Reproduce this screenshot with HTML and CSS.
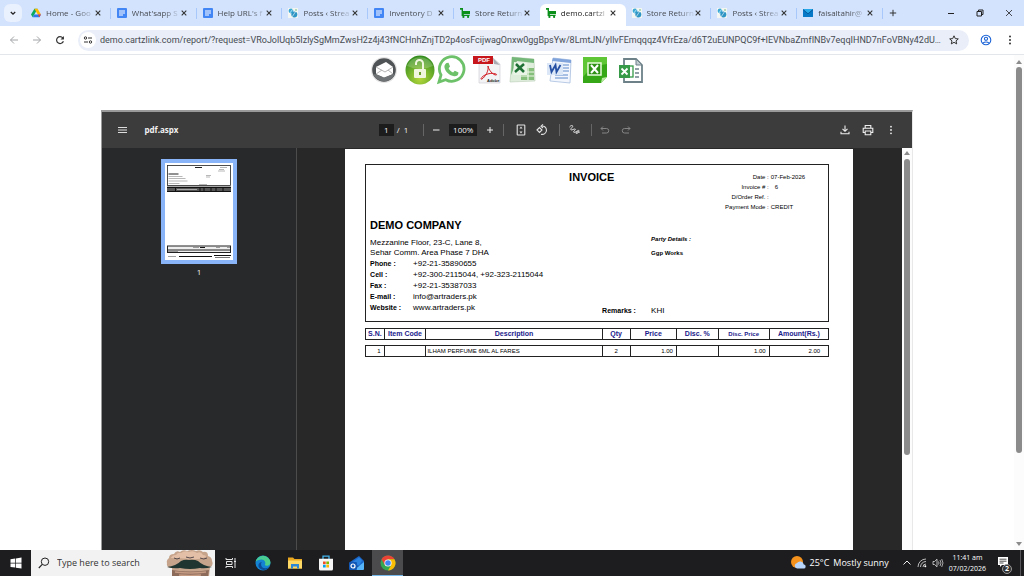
FILE: index.html
```html
<!DOCTYPE html>
<html lang="en">
<head>
<meta charset="utf-8">
<title>demo.cartzlink.com</title>
<link rel="stylesheet" href="styles.css">
</head>
<body>
<svg class="defs" aria-hidden="true">
  <symbol id="doc" viewBox="0 0 10 10"><rect width="10" height="10" rx="1" fill="#4285f4"/><path d="M2 3h6M2 5h6M2 7h4" stroke="#fff" stroke-width="1"/></symbol>
  <symbol id="drive" viewBox="0 0 10 10"><path d="M3.4.8h3.2L3.2 6.8 1.7 9.3 0 6.6z" fill="#0da960"/><path d="M3.4.8h3.2L10 6.6H6.8z" fill="#ffba00"/><path d="M3.2 6.6H10L8.4 9.3H1.7z" fill="#2f78ea"/><path d="M10 6.6 8.4 9.3 6.8 6.6z" fill="#ea4335"/></symbol>
  <symbol id="stream" viewBox="0 0 10 10"><rect width="10" height="10" fill="#f4f6f4"/><circle cx="3" cy="3" r="2.4" fill="#3ba9d6"/><circle cx="6.3" cy="6.5" r="3" fill="#2f95c4"/><path d="M1 6l4-5M4 9l4-6" stroke="#fff" stroke-width=".6"/><circle cx="8" cy="2" r="1" fill="#9cd0a8"/></symbol>
  <symbol id="cart" viewBox="0 0 10 10"><path d="M0 0h3v3H10v3.200H3.800v.8h5.800v1H1.600V1.800H0z" fill="#0a8f1a"/><circle cx="3.4" cy="8.900" r="1.100" fill="#0a8f1a"/><circle cx="8.1" cy="8.900" r="1.100" fill="#0a8f1a"/></symbol>
  <symbol id="mail" viewBox="0 0 10 10"><rect y="1" width="10" height="8" rx=".5" fill="#0879c7"/><path d="M0 1h10L5 5.6z" fill="#27a8e8"/><path d="M0 1.6l5 4.2 5-4.2" fill="none" stroke="#064f8e" stroke-width=".8"/></symbol>
  <symbol id="close" viewBox="0 0 8 8"><path d="M1.7 1.7l4.6 4.6M6.3 1.7L1.7 6.3" stroke="#333" stroke-width="1.1"/></symbol>
</svg>

<header class="browser">
  <div class="tabstrip">
    <button class="tab-search" aria-label="Search tabs"><svg width="8" height="8" viewBox="0 0 8 8"><path d="M1.8 3l2.2 2.2L6.2 3" fill="none" stroke="#222" stroke-width="1.3"/></svg></button>
    <nav class="tabs" aria-label="Open tabs">
      <div class="tab"><svg class="fav"><use href="#drive"/></svg><a href="#">Home - Goo</a><button aria-label="Close tab"><svg><use href="#close"/></svg></button></div>
      <div class="tab"><svg class="fav"><use href="#doc"/></svg><a href="#">What'sapp S</a><button aria-label="Close tab"><svg><use href="#close"/></svg></button></div>
      <div class="tab"><svg class="fav"><use href="#doc"/></svg><a href="#">Help URL's f</a><button aria-label="Close tab"><svg><use href="#close"/></svg></button></div>
      <div class="tab"><svg class="fav"><use href="#stream"/></svg><a href="#">Posts ‹ Strea</a><button aria-label="Close tab"><svg><use href="#close"/></svg></button></div>
      <div class="tab"><svg class="fav"><use href="#doc"/></svg><a href="#">Inventory D</a><button aria-label="Close tab"><svg><use href="#close"/></svg></button></div>
      <div class="tab before-active"><svg class="fav"><use href="#cart"/></svg><a href="#">Store Return</a><button aria-label="Close tab"><svg><use href="#close"/></svg></button></div>
      <div class="tab active"><svg class="fav"><use href="#cart"/></svg><a href="#">demo.cartzl</a><button aria-label="Close tab"><svg><use href="#close"/></svg></button></div>
      <div class="tab"><svg class="fav"><use href="#stream"/></svg><a href="#">Store Return</a><button aria-label="Close tab"><svg><use href="#close"/></svg></button></div>
      <div class="tab"><svg class="fav"><use href="#stream"/></svg><a href="#">Posts ‹ Strea</a><button aria-label="Close tab"><svg><use href="#close"/></svg></button></div>
      <div class="tab"><svg class="fav"><use href="#mail"/></svg><a href="#">faisaltahir@</a><button aria-label="Close tab"><svg><use href="#close"/></svg></button></div>
    </nav>
    <div class="window-controls">
      <button class="new-tab" aria-label="New tab"><svg width="8" height="8" viewBox="0 0 8 8"><path d="M4 .8v6.4M.8 4h6.4" stroke="#333"/></svg></button>
      <button aria-label="Minimize"><svg width="8" height="8" viewBox="0 0 8 8"><path d="M1 4.500h6" stroke="#222"/></svg></button>
      <button aria-label="Restore"><svg width="8" height="8" viewBox="0 0 8 8"><path d="M1 2.5h4.500V7H1zM2.500 2.500V1H7v4.500H5.500" fill="none" stroke="#222"/></svg></button>
      <button aria-label="Close window"><svg width="8" height="8" viewBox="0 0 8 8"><path d="M1 1l6 6M7 1L1 7" stroke="#222" stroke-width=".8"/></svg></button>
    </div>
  </div>
  <div class="toolbar">
    <button aria-label="Back"><svg width="10" height="10" viewBox="0 0 10 10"><path d="M9 5H1.500M5 1.500L1.500 5 5 8.500" fill="none" stroke="#a2a4a8"/></svg></button>
    <button aria-label="Forward"><svg width="10" height="10" viewBox="0 0 10 10"><path d="M1 5h7.500M5 1.500L8.500 5 5 8.500" fill="none" stroke="#a2a4a8"/></svg></button>
    <button aria-label="Reload"><svg width="10" height="10" viewBox="0 0 10 10"><path d="M8.400 6.200A3.500 3.500 0 1 1 7.800 2.800L8.500 3.700" fill="none" stroke="#333" stroke-width="1.200"/><path d="M8.900 1v3.400H5.500z" fill="#333"/></svg></button>
    <div class="omnibox">
      <button class="site-info" aria-label="Site information"><svg width="10" height="10" viewBox="0 0 10 10"><circle cx="2.500" cy="3" r="1.200" fill="none" stroke="#333"/><circle cx="7.500" cy="7" r="1.200" fill="none" stroke="#333"/><path d="M5 3h4M1 7h4" stroke="#333" stroke-width="1.100"/></svg></button>
      <input type="text" aria-label="Address" value="demo.cartzlink.com/report/?request=VRoJolUqb5IzlySgMmZwsH2z4j43fNCHnhZnjTD2p4osFcijwagOnxw0ggBpsYw/8LmtJN/yIlvFEmqqqz4VfrEza/d6T2uEUNPQC9f+IEVNbaZmfINBv7eqqIHND7nFoVBNy42dU3PxK...">
      <button aria-label="Bookmark"><svg width="12" height="12" viewBox="0 0 12 12"><path d="M6 1.800l1.300 2.800 3 .3-2.300 2 .7 3L6 8.300 3.300 9.900l.7-3-2.300-2 3-.3z" fill="none" stroke="#333"/></svg></button>
    </div>
    <button aria-label="Profile"><svg width="12" height="12" viewBox="0 0 12 12"><circle cx="6" cy="6" r="4.800" fill="none" stroke="#1a62d6" stroke-width="1.100"/><circle cx="6" cy="4.800" r="1.600" fill="none" stroke="#1a62d6" stroke-width="1.100"/><path d="M3 9.200c1.500-1.700 4.500-1.700 6 0" fill="none" stroke="#1a62d6" stroke-width="1.100"/></svg></button>
    <button aria-label="Menu"><svg width="10" height="10" viewBox="0 0 10 10" fill="#333"><circle cx="5" cy="1.500" r="1"/><circle cx="5" cy="5" r="1"/><circle cx="5" cy="8.500" r="1"/></svg></button>
  </div>
</header>

<div class="content">
  <main class="page">
    <nav class="actions" aria-label="Send or export">
      <a href="#" aria-label="Email"><svg width="28" height="30" viewBox="0 0 28 30"><circle cx="14" cy="15" r="13" fill="#e4e4e4"/><circle cx="14" cy="15" r="11.800" fill="#505355"/><path d="M6 12l10-5 7 5v7l-9 4-8-4z" fill="#fff"/><path d="M6 12l9 5 8-5M6 19l6-4M23 19l-5-4" fill="none" stroke="#b5b5b5"/><path d="M3 19a11.800 11.800 0 0 0 22-.5q-2 .5-11 4-7-3.500-11-3.500z" fill="#707375"/></svg></a>
      <a href="#" aria-label="Unlock"><svg width="30" height="30" viewBox="0 0 30 30"><defs><radialGradient id="lime" cx=".5" cy=".8" r=".8"><stop stop-color="#b5d83c"/><stop offset="1" stop-color="#2f8a1c"/></radialGradient></defs><circle cx="15" cy="15" r="14.500" fill="url(#lime)"/><path d="M2 11A14 14 0 0 1 28 11Q15 17 2 11z" fill="#fff" opacity=".2"/><rect x="9" y="14" width="12" height="9" rx="1" fill="#f1f7df"/><path d="M11 10V8.500a3.500 3.500 0 0 1 7 0V14" fill="none" stroke="#f1f7df" stroke-width="2"/><path d="M15 17v3" stroke="#6a9f2a" stroke-width="2"/></svg></a>
      <a class="whatsapp" href="#" aria-label="WhatsApp"><svg width="30" height="30" viewBox="0 0 30 30"><path d="M3 27l2-7a12.300 12.300 0 1 1 4.700 4.700z" fill="#fff" stroke="#6dc169" stroke-width="2.800"/><path d="M10.500 8l2-.3 1.500 3.700-1.400 1.800c1 2 2.400 3.400 4.500 4.300l1.700-1.800 3.700 1.800c0 3-2.200 4-4.200 3.800-5-.7-9.400-5-9.900-9.300-.1-1.700.9-3.200 2.100-4z" fill="#6dc169"/></svg></a>
      <a href="#" aria-label="PDF"><svg width="28" height="30" viewBox="0 0 28 30"><path d="M6 3h14l7 6v19H6z" fill="#f2f3f5" stroke="#c9cbd0" stroke-width=".6"/><path d="M20 3l7 7-6-1z" fill="#a9acb3"/><rect y="1" width="20" height="8" fill="#c8161d"/><text class="pdf-tag" x="5" y="7">PDF</text><path d="M15 11c1 5-3 11-6 13-2 1-1-2 3-4s8-2 11-1c2 1-1 2-4-1s-4-6-4-7z" fill="none" stroke="#d22027" stroke-width="1"/><text class="adobe-tag" x="14" y="27">Adobe</text></svg></a>
      <a href="#" aria-label="Excel"><svg width="28" height="30" viewBox="0 0 28 30"><path d="M3 2l22 2 1 22-25 1z" fill="#dfeddc" stroke="#b9cdb5" stroke-width=".6"/><path d="M3 2l22 2v4L8 6 2 20z" fill="#74b779"/><rect x="12" y="13" width="13" height="12" fill="#86bf7b"/><path d="M12 17h13M12 21h13M19 13v12" stroke="#eff8eb" stroke-width="1.200"/><path d="M5 7l13 1v12L4 20z" fill="#e9f3e6"/><path d="M7 9l8 8M15 9l-9 8" stroke="#1e7035" stroke-width="2.500"/></svg></a>
      <a href="#" aria-label="Word"><svg width="26" height="30" viewBox="0 0 26 30"><path d="M7 3l18 2-1 23-20-2z" fill="#f3f7fd" stroke="#a8bedf" stroke-width=".8"/><path d="M7 3l18 2v3L6 6z" fill="#7fa3da"/><path d="M17 10h6M17 13h6M17 16h6M9 20h13M9 23h13" stroke="#5f88cc"/><rect x="1" y="8" width="16" height="12" fill="#dbe6f6"/><path d="M4 10l1.500 7 4-7 1 7 4-7" fill="none" stroke="#244fa3" stroke-width="1.800"/></svg></a>
      <a href="#" aria-label="Excel workbook"><svg width="26" height="30" viewBox="0 0 26 30"><path d="M1 2h24v20l-6 6H1z" fill="#36a818"/><path d="M1 2h24v7Q10 10 1 22z" fill="#5fc636"/><path d="M25 22l-6 6 1-5z" fill="#b9eaa1"/><rect x="6" y="8" width="13" height="12" fill="#2f9116" stroke="#e9fbdc" stroke-width="1.500"/><path d="M9 10l7 8M16 10l-7 8" stroke="#fff" stroke-width="2"/></svg></a>
      <a href="#" aria-label="Spreadsheet"><svg width="26" height="30" viewBox="0 0 26 30"><path d="M6 4h12l6 6v17H6z" fill="#fff" stroke="#6d8189" stroke-width="1.800"/><path d="M18 4v6h6z" fill="#c2cdd1" stroke="#6d8189"/><path d="M17 14h4M17 18h4M17 22h4" stroke="#6d8189" stroke-width="1.600"/><rect x="9" y="11" width="6" height="11" fill="#fff" stroke="#379a48" stroke-width="1.300"/><rect x="1" y="10" width="11" height="13" fill="#379a48"/><path d="M3.500 13.500l6 6M9.500 13.500l-6 6" stroke="#fff" stroke-width="1.800"/></svg></a>
    </nav>

    <section class="viewer" aria-label="PDF viewer">
      <div class="viewer-bar">
        <div class="bar-left">
          <button aria-label="Sidebar"><svg width="10" height="8" viewBox="0 0 10 8"><path d="M0 1.500h9M0 4h9M0 6.500h9" stroke="#ddd"/></svg></button>
          <strong>pdf.aspx</strong>
        </div>
        <div class="bar-mid">
          <input class="page-no" type="text" value="1" aria-label="Page"><span>/</span><span class="page-total">1</span>
          <i class="rule first"></i>
          <button aria-label="Zoom out"><svg width="8" height="8" viewBox="0 0 8 8"><path d="M1 4h6.500" stroke="#eee"/></svg></button>
          <input class="zoom" type="text" value="100%" aria-label="Zoom">
          <button aria-label="Zoom in"><svg width="8" height="8" viewBox="0 0 8 8"><path d="M4 1v6M1 4h6" stroke="#eee"/></svg></button>
          <i class="rule fit"></i>
          <button aria-label="Fit to page"><svg width="12" height="12" viewBox="0 0 12 12"><rect x="2.200" y="1" width="7.600" height="10" rx=".6" fill="none" stroke="#e2e2e2" stroke-width="1.100"/><path d="M6 2.500L7.500 4.500h-3zM6 9.500L7.500 7.500h-3z" fill="#e2e2e2"/></svg></button>
          <button class="rotate" aria-label="Rotate"><svg width="12" height="12" viewBox="0 0 12 12"><path d="M1 6l2.500-2.500L6 6 3.500 8.500zM5 2.200a4.200 4.200 0 1 1 0 8M7 .4L5 2.200 7 4" fill="none" stroke="#e2e2e2" stroke-width="1.100"/></svg></button>
          <i class="rule"></i>
          <button aria-label="Annotate"><svg width="12" height="12" viewBox="0 0 12 12"><path d="M1.500 3c2-2.500 4.500-1.500 2.500.5S2.500 6.500 5 5.500s3-.5 1.500 1-1 2.500 1 1.500 3.500-2.500 3.500-1S8 10.500 8 9s1.500-1.500 3.500-.5" fill="none" stroke="#e2e2e2"/></svg></button>
          <i class="rule"></i>
          <button aria-label="Undo"><svg width="10" height="10" viewBox="0 0 10 10"><path d="M3 1.500L1 3.500l2 2M1 3.500h5.500a2.200 2.200 0 0 1 0 4.500H2" fill="none" stroke="#858585"/></svg></button>
          <button class="redo" aria-label="Redo"><svg width="10" height="10" viewBox="0 0 10 10"><path d="M7 1.500l2 2-2 2M9 3.500H3.500a2.200 2.200 0 0 0 0 4.500H8" fill="none" stroke="#858585"/></svg></button>
        </div>
        <div class="bar-right">
          <button aria-label="Download"><svg width="10" height="10" viewBox="0 0 10 10"><path d="M5 .5v5.500M2.500 3.800L5 6.300l2.500-2.500M1 6.800v2h8v-2" fill="none" stroke="#eee" stroke-width="1.100"/></svg></button>
          <button aria-label="Print"><svg width="12" height="12" viewBox="0 0 12 12"><path d="M3.200 4V1.500h5.600V4M3.200 8.500H1.200V4.200h9.600v4.300H8.800M3.200 7h5.600v3.700H3.200z" fill="none" stroke="#eee" stroke-width="1.100"/></svg></button>
          <button aria-label="More"><svg width="10" height="10" viewBox="0 0 10 10" fill="#eee"><circle cx="5" cy="1.700" r=".9"/><circle cx="5" cy="5" r=".9"/><circle cx="5" cy="8.300" r=".9"/></svg></button>
        </div>
      </div>
      <div class="viewer-body">
        <aside class="thumbs">
          <a class="thumb" href="#" aria-label="Page 1"><svg viewBox="0 0 68 97"><rect width="68" height="97" fill="#fff"/><rect x="2.500" y="2.500" width="63" height="20" fill="none" stroke="#222" stroke-width=".8"/><path d="M30 4.500h7M3.500 11h10" stroke="#222"/><path d="M55 4.500h7M54 6.500h5M53 8h7M3.500 13.500h14M3.500 15.500h17M3.500 18h19M3.500 20.500h11M41 12.500h5M41 14h4M34 21.500h8" stroke="#888" stroke-width=".6"/><rect x="2" y="23.500" width="64" height="5.500" fill="#555"/><path d="M2 24.500h64M2 28.500h64M10.500 24v5M35 24v5M39 24v5M46 24v5M51 24v5M58 24v5" stroke="#111"/><path d="M12 26.500h20" stroke="#bbb" stroke-width=".8"/><rect x="2.500" y="83" width="63" height="6.500" fill="#eee" stroke="#222"/><path d="M2.500 87h63" stroke="#222"/><path d="M28 84.500h6M51 84.500h4M62 84.500h3M3 88.500h10M3 93.500h8" stroke="#777" stroke-width=".7"/><path d="M35 84.500h5M14 93.500h33M49 92.500h17" stroke="#111" stroke-width="1.200"/><path d="M50 94.500h15" stroke="#777"/></svg></a>
          <span>1</span>
        </aside>
        <div class="canvas">
          <article class="invoice">
            <div class="box">
              <div class="box-head">
                <h1>INVOICE</h1>
                <dl class="meta">
                  <dt>Date :</dt><dd>07-Feb-2026</dd>
                  <dt>Invoice # :</dt><dd class="number">6</dd>
                  <dt>D/Order Ref. :</dt><dd></dd>
                  <dt>Payment Mode :</dt><dd>CREDIT</dd>
                </dl>
              </div>
              <div class="box-body">
                <div class="company">
                  <h2>DEMO COMPANY</h2>
                  <address>Mezzanine Floor, 23-C, Lane 8,<br>Sehar Comm. Area Phase 7 DHA</address>
                  <dl class="contacts">
                    <dt>Phone :</dt><dd>+92-21-35890655</dd>
                    <dt>Cell :</dt><dd>+92-300-2115044, +92-323-2115044</dd>
                    <dt>Fax :</dt><dd>+92-21-35387033</dd>
                    <dt>E-mail :</dt><dd>info@artraders.pk</dd>
                    <dt>Website :</dt><dd>www.artraders.pk</dd>
                  </dl>
                </div>
                <div class="party">
                  <div class="party-details">
                    <h3>Party Details :</h3>
                    <p>Ggp Works</p>
                  </div>
                  <dl class="remarks"><dt>Remarks :</dt><dd>KHI</dd></dl>
                </div>
              </div>
            </div>
            <table class="items">
              <colgroup><col class="c-sn"><col class="c-code"><col class="c-desc"><col class="c-qty"><col class="c-price"><col class="c-disc"><col class="c-dprice"><col class="c-amount"></colgroup>
              <thead><tr><th>S.N.</th><th>Item Code</th><th>Description</th><th>Qty</th><th>Price</th><th>Disc. %</th><th class="small">Disc. Price</th><th>Amount(Rs.)</th></tr></thead>
              <tbody><tr><td class="num">1</td><td></td><td>ILHAM PERFUME 6ML AL FARES</td><td class="mid">2</td><td class="num">1.00</td><td></td><td class="num">1.00</td><td class="num amount">2.00</td></tr></tbody>
            </table>
          </article>
        </div>
        <div class="scroll inner-scroll"><svg class="arrow" viewBox="0 0 6 6"><path d="M3 1l3 4H0z"/></svg><i class="thumb-bar"></i></div>
      </div>
    </section>
  </main>
  <div class="scroll page-scroll"><svg class="arrow" viewBox="0 0 6 6"><path d="M3 1l3 4H0z"/></svg><i class="thumb-bar"></i><svg class="arrow down" viewBox="0 0 6 6"><path d="M3 5l3-4H0z"/></svg></div>
</div>

<footer class="taskbar">
  <button class="start" aria-label="Start"><svg width="12" height="12" viewBox="0 0 12 12"><path d="M.5 2.200L5.200 1.500v4.200H.5zM5.900 1.400L11.500.6v5.100H5.900zM.5 6.400h4.700v4.200L.5 9.900zM5.900 6.400h5.600v5.100l-5.600-.8z" fill="#fff"/></svg></button>
  <label class="search">
    <svg width="12" height="12" viewBox="0 0 12 12"><circle cx="7" cy="4.700" r="3.700" fill="none" stroke="#222"/><path d="M4.300 7.400L.8 11" stroke="#222" stroke-width="1.100"/></svg>
    <input type="text" placeholder="Type here to search" aria-label="Type here to search">
    <svg class="mascot" width="48" height="26" viewBox="0 0 48 26"><path d="M6 18Q0 18 1 13q-1-3 2-5 0-4 5-4 2-4 6-2 3-3 7-1 5-2 9 0 4-2 7 1 5-1 5 4 4 1 4 5 2 4-2 6l-1 9H6z" fill="#c6a48c"/><path d="M5 8q1-3 5-3 2-3 5-2 4-3 8-1 4-2 8 1 4-2 6 2 3 0 3 2-7 3-16 2T5 8z" fill="#e2bfa6"/><path d="M8 8q3 2 6 0M20 7q4 2 8 0M34 8q4 2 7 0" fill="none" stroke="#554a4c"/><path d="M1 17q9-1 14-6 4-2 8-1 5-1 9 1 5 5 14 6-7 2-12 1-10 2-20 0-6 1-13-1z" fill="#20352f"/><path d="M6 20q18 3 37 0l-1 6H6z" fill="#8d6b5b"/><path d="M9 22q15 2 31 0M13 25q12 1 22 0" fill="none" stroke="#c59b83" stroke-width="1.300"/></svg>
  </label>
  <div class="apps">
    <button aria-label="Task view"><svg width="12" height="12" viewBox="0 0 12 12"><path d="M1 1v1.500h6.500V1M1.500 4.500h5.500v3H1.500zM1 11V9.500h6.500V11M10 1v10M9 4.500h2" fill="none" stroke="#e5e5e5"/></svg></button>
    <button aria-label="Edge"><svg width="16" height="16" viewBox="0 0 16 16"><circle cx="8" cy="8" r="7.500" fill="#1583d3"/><path d="M.6 7A7.500 7.500 0 0 1 15.400 7c.4 4-4.500 4.500-5.700 3 1.800-2-.2-5.500-3-5.500S1 5.500.6 7z" fill="#4bcf8a"/><path d="M.6 7C2.500 1 10 0 11.500 5.500 8-1 2 4 .6 7z" fill="#2ab6da"/><path d="M6 9c0 4 4 5.500 8 3.200-3 4.500-9 3-10.500-.7C3 8.500 5 7 7 7c-.7.600-1 1.200-1 2z" fill="#0b4d99"/></svg></button>
    <button aria-label="File Explorer"><svg width="14" height="14" viewBox="0 0 14 14"><path d="M0 1.500h5l1.500 1.500H14v9.500H0z" fill="#e9a820"/><path d="M0 4.500h14v8H0z" fill="#ffd965"/><path d="M3 8h8v4.500H9v-2H5v2H3z" fill="#2e88d6"/></svg></button>
    <button aria-label="Store"><svg width="16" height="16" viewBox="0 0 16 16"><path d="M5 4V1.200h6V4" fill="none" stroke="#42b4ec" stroke-width="1.300"/><path d="M1 3.800h14V14q0 1.500-1.500 1.500h-11Q1 15.500 1 14z" fill="#f5f5f5"/><path d="M5 6.500h2.700v2.700H5z" fill="#f25022"/><path d="M8.300 6.500H11v2.700H8.300z" fill="#7fba00"/><path d="M5 9.800h2.700v2.700H5z" fill="#00a4ef"/><path d="M8.300 9.800H11v2.700H8.300z" fill="#ffb900"/></svg></button>
    <button aria-label="Outlook"><svg width="16" height="16" viewBox="0 0 16 16"><path d="M1 7l9-6 5 5v3l-7 3z" fill="#1a66c9"/><path d="M3 7.500l7-5 3 3-3 5z" fill="#2b83e0"/><path d="M5 15l10-8v7q0 1-1 1z" fill="#56b5fa"/><rect x="0" y="7" width="8" height="8" rx="1" fill="#1257b4"/><circle cx="4" cy="11" r="2" fill="none" stroke="#fff" stroke-width="1.200"/></svg></button>
    <button class="current" aria-label="Chrome"><svg width="16" height="16" viewBox="0 0 16 16"><circle cx="8" cy="8" r="7.500" fill="#34a853"/><path d="M1.500 4.250A7.500 7.500 0 0 1 14.500 4.250H8L4.750 9.900z" fill="#ea4335"/><path d="M14.500 4.250A7.500 7.500 0 0 1 8 15.500L11.250 9.900 8 4.250z" fill="#fbbc05"/><circle cx="8" cy="8" r="3.600" fill="#fff"/><circle cx="8" cy="8" r="2.800" fill="#4285f4"/></svg></button>
  </div>
  <div class="tray">
    <button class="weather"><svg width="16" height="16" viewBox="0 0 16 16"><circle cx="7" cy="7" r="6" fill="#f5921e"/><path d="M7 13.500a2.800 2.800 0 0 1 0-5.500 3.800 3.800 0 0 1 6.800 1.500 2 2 0 0 1-.3 4z" fill="#b7d4fa"/></svg><span>25°C</span><span class="sky">Mostly sunny</span></button>
    <button aria-label="Hidden icons"><svg width="10" height="10" viewBox="0 0 10 10"><path d="M1.500 6.500L5 3l3.500 3.500" fill="none" stroke="#eee"/></svg></button>
    <button aria-label="Network"><svg width="10" height="10" viewBox="0 0 10 10"><path d="M1 9a8 8 0 0 1 8-8M3.500 9A5.500 5.500 0 0 1 9 3.500M6 9a3 3 0 0 1 3-3" fill="none" stroke="#bbb"/><circle cx="8.300" cy="8.300" r="1" fill="#fff"/></svg></button>
    <button aria-label="Volume"><svg width="12" height="10" viewBox="0 0 12 10"><path d="M1 3.500h1.500L5 1.200v7.600L2.500 6.500H1z" fill="none" stroke="#ddd" stroke-width=".8"/><path d="M6.500 3.500q1 1.500 0 3M8 2q2 3 0 6M9.700 1q2.600 4 0 8" fill="none" stroke="#ccc" stroke-width=".8"/></svg></button>
    <button class="clock"><span>11:41 am</span><span>07/02/2026</span></button>
    <button class="notify" aria-label="2 notifications"><svg width="12" height="14" viewBox="0 0 12 14"><path d="M1 1h10v8H5l-2 2V9H1z" fill="#fff"/><path d="M2.500 3.200h7M2.500 5.200h7M2.500 7h4" stroke="#222" stroke-width=".8"/></svg><b class="badge">2</b></button>
  </div>
</footer>
</body>
</html>
```
FILE: styles.css
```css
* { box-sizing: border-box; }
body {
  margin: 0;
  height: 100vh;
  display: flex;
  flex-direction: column;
  overflow: hidden;
  background: #fff;
  color: #222;
  font: 8px/12px "Open Sans", "Noto Sans", sans-serif;
}
h1, h2, h3, p, dl, dd { margin: 0; }
a { color: inherit; text-decoration: none; }
button {
  display: flex;
  align-items: center;
  justify-content: center;
  padding: 0;
  border: 0;
  background: none;
  color: inherit;
  font: inherit;
}
input {
  min-width: 0;
  padding: 0;
  border: 0;
  background: none;
  color: inherit;
  font: inherit;
  outline: none;
}
svg { display: block; flex: none; }
.defs { position: absolute; width: 0; height: 0; }

/* Browser chrome */
.tabstrip {
  display: flex;
  align-items: center;
  height: 26px;
  background: #d3e3fd;
}
.tab-search {
  width: 18px;
  height: 18px;
  margin: 0 3px 0 4px;
  border-radius: 6px;
  background: #e9f1fe;
}
.tabs { flex: 1; display: flex; align-self: stretch; min-width: 0; }
.tab {
  flex: 1 1 0;
  min-width: 0;
  display: flex;
  align-items: center;
  padding: 0 9px 0 6px;
  position: relative;
  color: #474b52;
}
.tab::after {
  content: "";
  position: absolute;
  right: 0;
  top: 8px;
  width: 1px;
  height: 11px;
  background: #a8c7fa;
}
.tab.active::after, .tab.before-active::after { display: none; }
.tab a {
  flex: 1;
  min-width: 0;
  margin-left: 5px;
  white-space: nowrap;
  -webkit-mask-image: linear-gradient(90deg, #000 65%, rgba(0, 0, 0, 0.2) 95%);
  mask-image: linear-gradient(90deg, #000 65%, rgba(0, 0, 0, 0.2) 95%);
}
.tab.active {
  height: 22px;
  align-self: flex-end;
  padding: 0 9px 4px 6px;
  border-radius: 6px 6px 0 0;
  background: #fff;
  color: #222;
}
.fav { width: 10px; height: 10px; }
.tab button svg { width: 8px; height: 8px; }
.window-controls { display: flex; align-items: center; padding-right: 11px; }
.window-controls button { width: 8px; margin-left: 21px; }
.window-controls .new-tab { margin: 0 29px 0 6px; }
.toolbar {
  display: flex;
  align-items: center;
  gap: 13px;
  height: 29px;
  padding: 0 9px;
  border-bottom: 1px solid #e3e6ea;
}
.omnibox {
  flex: 1;
  display: flex;
  align-items: center;
  min-width: 0;
  height: 21px;
  margin-right: -2px;
  padding: 0 9px 0 2px;
  border-radius: 11px;
  background: #e9eef8;
}
.omnibox input {
  flex: 1;
  margin: 0 6px 0 4px;
  color: #474b52;
  font-family: Roboto, "Open Sans", sans-serif;
  font-size: 9px;
  text-overflow: ellipsis;
}
.site-info { width: 16px; height: 16px; border-radius: 8px; background: #fff; }

/* Web page */
.content { flex: 1; display: flex; min-height: 0; }
.page {
  flex: 1;
  min-width: 0;
  display: flex;
  flex-direction: column;
  align-items: center;
}
.actions { display: flex; padding-bottom: 25px; }
.actions a { display: flex; justify-content: center; width: 36px; }
.actions .whatsapp { margin-left: -5px; }
.viewer {
  flex: 1;
  min-height: 0;
  width: 80%;
  display: flex;
  flex-direction: column;
  border: solid #9a9a9a;
  border-width: 2px 1px 0 1px;
  border-right-color: #e8e8e8;
}
.viewer-bar {
  display: grid;
  grid-template-columns: 1fr auto 1fr;
  align-items: center;
  height: 36px;
  padding: 0 16px;
  background: #3c3c3c;
  color: #f1f1f1;
}
.bar-left, .bar-mid, .bar-right { display: flex; align-items: center; }
.bar-left { gap: 16px; }
.bar-right { justify-content: flex-end; gap: 12px; }
.bar-mid { padding-right: 4px; }
.bar-mid input { height: 12px; background: #1c1c1c; text-align: center; }
.page-no { width: 15px; margin-right: 3px; }
.page-total { margin-left: 4px; }
.zoom { width: 28px; margin: 0 9px; }
.rule { width: 1px; height: 12px; margin: 0 8px 0 11px; background: #666; }
.rule.first { margin-left: 15px; }
.rule.fit { margin: 0 11px 0 9px; }
.rotate { margin-left: 9px; }
.redo { margin-left: 11px; }
.viewer-body { flex: 1; min-height: 0; display: flex; background: #282828; }
.thumbs {
  flex: 0 0 24%;
  display: flex;
  flex-direction: column;
  align-items: center;
  gap: 2px;
  padding-top: 11px;
  border-right: 1px solid #4c4c4c;
  background: #28292b;
  color: #f1f1f1;
}
.thumb { width: 76px; border: 4px solid #8ab4f8; }
.canvas { flex: 1; min-width: 0; display: flex; justify-content: center; padding-top: 1px; }
.scroll {
  display: flex;
  flex-direction: column;
  align-items: center;
  background: #fcfcfc;
}
.inner-scroll { flex: 0 0 10px; padding-top: 2px; }
.page-scroll { flex: 0 0 10px; padding: 4px 0 3px; }
.arrow { width: 6px; height: 6px; fill: #8b8b8b; }
.arrow.down { margin-top: auto; }
.thumb-bar { width: 6px; border-radius: 3px; background: #8b8b8b; }
.inner-scroll .thumb-bar { height: 74%; margin-top: 3px; }
.page-scroll .thumb-bar { height: 79%; margin-top: 2px; }

/* Invoice */
.invoice {
  flex: 0 1 508px;
  padding: 15px 24px 0 20px;
  background: #fff;
  color: #000;
  font: 6px/10px "Liberation Sans", Arial, sans-serif;
}
.box { border: 1px solid #222; padding: 7px 0 5px 4px; }
.box-head { display: flex; justify-content: space-between; padding-left: 199px; }
h1, h2 { font-size: 11px; line-height: 14px; }
h1 { line-height: 10px; }
.meta { display: grid; grid-template-columns: auto auto; column-gap: 2px; padding-right: 23px; }
.meta dt { text-align: right; }
.meta .number { padding-left: 4px; }
.box-body { display: flex; margin-top: 6px; }
.company { flex: 1; padding-bottom: 3px; }
.company h2 { margin-bottom: 6px; }
address { font-size: 8px; font-style: normal; }
.contacts {
  display: grid;
  grid-template-columns: 43px 1fr;
  font-size: 8px;
  line-height: 11px;
}
.contacts dt, .remarks dt { font-weight: bold; font-size: 7px; }
.party {
  flex: 0 0 226px;
  display: flex;
  flex-direction: column;
  justify-content: space-between;
  padding-top: 16px;
}
.party-details { padding-left: 49px; font-weight: bold; }
.party-details h3 { margin-bottom: 4px; font-size: 6px; font-style: italic; }
.remarks { display: grid; grid-template-columns: 49px 1fr; font-size: 8px; }
.items {
  width: 100%;
  margin-top: 1px;
  table-layout: fixed;
  border-collapse: separate;
  border-spacing: 0 5px;
}
.items th, .items td {
  height: 12px;
  padding: 0 1px;
  border: 1px solid #222;
  border-right: 0;
  white-space: nowrap;
  text-align: left;
}
.items th { color: #1a1a8c; font-size: 7px; text-align: center; }
.items th.small { font-size: 6px; }
.items th:last-child, .items td:last-child { border-right: 1px solid #222; }
.items .num { text-align: right; padding-right: 3px; }
.items .mid { text-align: center; }
.items .amount { padding-right: 8px; }
.c-sn { width: 4%; }
.c-code { width: 9%; }
.c-desc { width: 38%; }
.c-qty { width: 6%; }
.c-price { width: 10%; }
.c-disc { width: 9%; }
.c-dprice { width: 11%; }
.c-amount { width: 13%; }
.pdf-tag, .adobe-tag { font: bold 6px "Liberation Sans", Arial, sans-serif; fill: #fff; }
.adobe-tag { font-size: 4px; fill: #222; }

/* Taskbar */
.taskbar {
  display: flex;
  height: 26px;
  background: #1d1d20;
  color: #fff;
}
.start { width: 31px; }
.search {
  display: flex;
  align-items: center;
  width: 184px;
  padding: 0 1px 0 7px;
  background: #f2f2f2;
}
.search input { flex: 1; margin-left: 7px; font-size: 9px; color: #333; }
.search input::placeholder { color: #333; opacity: 1; }
.apps { display: flex; }
.apps button { width: 32px; }
.apps .current { background: #4b4b4d; border-bottom: 1px solid #76b9ed; }
.apps button:nth-child(n + 3) { width: 31px; }
.tray { display: flex; margin-left: auto; gap: 5px; padding-right: 3px; }
.weather { padding-right: 8px; font-size: 9px; }
.weather svg { margin-right: 4px; }
.sky { margin-left: 4px; }
.clock { flex-direction: column; font-size: 7px; line-height: 11px; }
.notify { position: relative; width: 30px; padding-right: 6px; border-right: 1px solid #55555a; }
.badge {
  position: absolute;
  right: 8px;
  bottom: 2px;
  width: 10px;
  height: 10px;
  border: 1px solid #999;
  border-radius: 50%;
  background: #333;
  font-size: 7px;
  line-height: 8px;
  text-align: center;
}
```
